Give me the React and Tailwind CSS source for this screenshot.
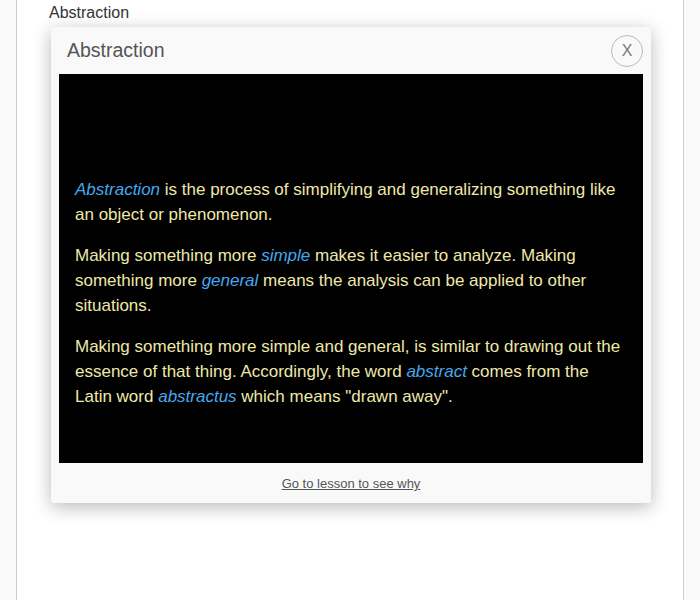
export default function App() {
  const em = "italic text-[#45a8ee]";
  return (
    <div className="min-h-[600px] bg-[#fafafa] font-['Liberation_Sans',Arial,sans-serif]">
      <div className="ml-[16px] w-[668px] min-h-[600px] bg-white border-x border-[#cccccc] pl-[32px]">
        <div className="pt-[1px] text-[16px] leading-[24px] text-[#333]">Abstraction</div>

        <div className="ml-[2px] mt-[2px] w-[600px] rounded-[3px] bg-[#f9f9f9] shadow-[0_4px_18px_rgba(0,0,0,0.28)]">
          <div className="h-[47px] flex items-center justify-between pl-[16px] pr-[8px]">
            <span className="text-[19.5px] text-[#555]">Abstraction</span>
            <button className="w-[32px] h-[32px] rounded-full border border-[#bbbbbb] flex items-center justify-center text-[16px] text-[#777] bg-transparent">
              X
            </button>
          </div>

          <div className="mx-[8px] h-[389px] bg-black pt-[103px] px-[16px] text-[17px] leading-[25px] text-[#eee8aa]">
            <p className="mb-[16px]">
              <span className={em}>Abstraction</span> is the process of simplifying and generalizing something like an object or phenomenon.
            </p>
            <p className="mb-[16px]">
              Making something more <span className={em}>simple</span> makes it easier to analyze. Making something more <span className={em}>general</span> means the analysis can be applied to other situations.
            </p>
            <p>
              Making something more simple and general, is similar to drawing out the essence of that thing. Accordingly, the word <span className={em}>abstract</span> comes from the Latin word <span className={em}>abstractus</span> which means "drawn away".
            </p>
          </div>

          <div className="h-[40px] pt-[2px] flex items-center justify-center">
            <a href="#" className="text-[13px] text-[#555] underline">Go to lesson to see why</a>
          </div>
        </div>
      </div>
    </div>
  );
}
